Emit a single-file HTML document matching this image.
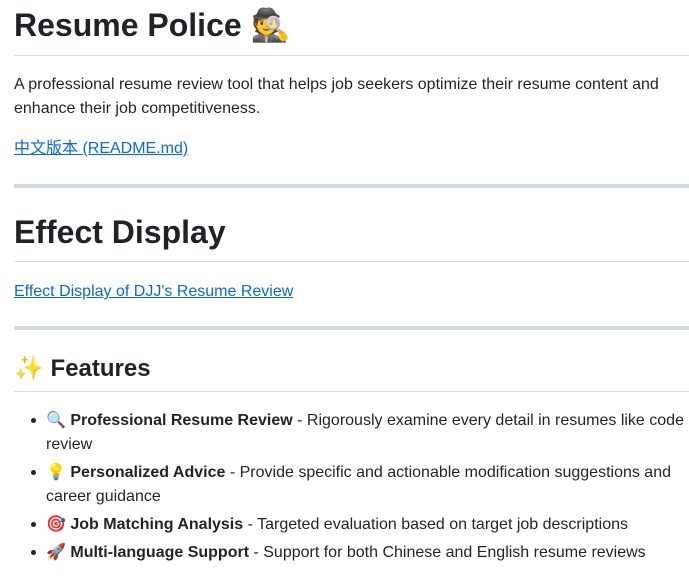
<!DOCTYPE html>
<html><head><meta charset="utf-8"><style>
body{margin:0;width:689px;height:581px;overflow:hidden;background:#fff;color:#1f2328;font-family:"Liberation Sans","Noto Sans CJK SC",sans-serif;font-size:16px;}
.a{position:absolute;left:14px;white-space:nowrap;}
.h1{font-size:32px;font-weight:bold;line-height:40px;}
.h2{font-size:24px;font-weight:bold;line-height:30px;}
.line{position:absolute;left:14px;width:675px;height:1px;background:#d8dee4;}
.hr{position:absolute;left:14px;width:675px;height:4px;background:#d1d9e0;}
a{color:#0969da;text-decoration:underline;}
.li{position:absolute;left:46px;line-height:24px;white-space:nowrap;}
.dot{position:absolute;left:31px;width:5px;height:5px;border-radius:50%;background:#1f2328;}
</style></head><body>
<div class="a h1" style="top:5px">Resume Police 🕵️</div>
<div class="line" style="top:55px"></div>
<div class="a" style="top:73px;line-height:24px">A professional resume review tool that helps job seekers optimize their resume content and<br>enhance their job competitiveness.</div>
<div class="a" style="top:137px;line-height:24px"><a>中文版本 (README.md)</a></div>
<div class="hr" style="top:184px"></div>
<div class="a h1" style="top:212px">Effect Display</div>
<div class="line" style="top:261px"></div>
<div class="a" style="top:280px;line-height:24px"><a>Effect Display of DJJ's Resume Review</a></div>
<div class="hr" style="top:326px"></div>
<div class="a h2" style="top:354px">✨ Features</div>
<div class="line" style="top:391px"></div>
<div class="dot" style="top:418px"></div>
<div class="li" style="top:409px">🔍 <b>Professional Resume Review</b> - Rigorously examine every detail in resumes like code<br>review</div>
<div class="dot" style="top:470px"></div>
<div class="li" style="top:461px">💡 <b>Personalized Advice</b> - Provide specific and actionable modification suggestions and<br>career guidance</div>
<div class="dot" style="top:522px"></div>
<div class="li" style="top:513px">🎯 <b>Job Matching Analysis</b> - Targeted evaluation based on target job descriptions</div>
<div class="dot" style="top:550px"></div>
<div class="li" style="top:541px">🚀 <b>Multi-language Support</b> - Support for both Chinese and English resume reviews</div>
</body></html>
